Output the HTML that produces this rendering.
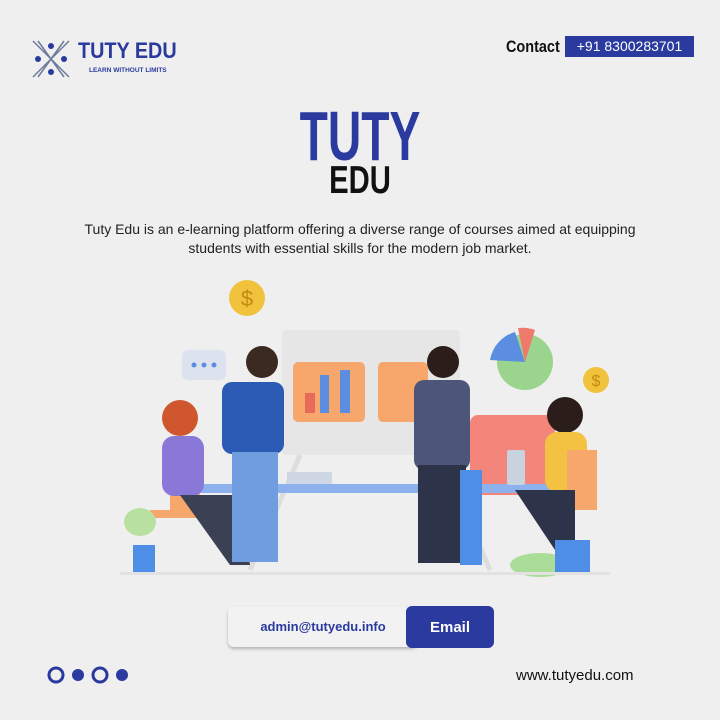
<!DOCTYPE html>
<html><head><meta charset="utf-8"><style>
body{margin:0;width:720px;height:720px;background:#efefef;position:relative;overflow:hidden;font-family:"Liberation Sans",sans-serif}
.a{position:absolute}
</style></head><body>
<svg class="a" style="left:30px;top:38px" width="42" height="42" viewBox="0 0 42 42">
<g stroke="#6d7a9a" stroke-width="1.5" fill="none"><path d="M3 3L39 39M39 3L3 39M8 3L21 21L34 3M8 39L21 21L34 39"/></g>
<g fill="#2a3a9e"><circle cx="21" cy="8" r="3"/><circle cx="21" cy="34" r="3"/><circle cx="8" cy="21" r="3"/><circle cx="34" cy="21" r="3"/></g></svg>
<div class="a" style="left:78px;top:38px;font-size:22px;font-weight:bold;color:#2a3a9e;transform:scaleX(.9);transform-origin:left">TUTY EDU</div>
<div class="a" style="left:89px;top:67px;font-size:6.5px;font-weight:bold;color:#2a3a9e">LEARN WITHOUT LIMITS</div>
<div class="a" style="left:506px;top:37px;font-size:17px;font-weight:bold;color:#111;transform:scaleX(.85);transform-origin:left">Contact</div>
<div class="a" style="left:565px;top:36px;width:129px;height:21px;background:#2a3a9e;color:#fff;font-size:14px;line-height:21px;text-align:center">+91 8300283701</div>
<div class="a" style="left:0;width:720px;top:96px;text-align:center;font-size:70px;font-weight:bold;color:#2a3a9e;transform:scaleX(.66)">TUTY</div>
<div class="a" style="left:0;width:720px;top:159px;text-align:center;font-size:39px;font-weight:bold;color:#111;transform:scaleX(.75)">EDU</div>
<div class="a" style="left:70px;width:580px;top:220px;text-align:center;font-size:14px;line-height:19px;color:#222">Tuty Edu is an e-learning platform offering a diverse range of courses aimed at equipping students with essential skills for the modern job market.</div>
<svg class="a" style="left:110px;top:280px" width="510" height="300" viewBox="110 280 510 300">
<circle cx="247" cy="298" r="18" fill="#f1c23c"/><text x="247" y="306" font-size="22" text-anchor="middle" fill="#c58a10">$</text>
<circle cx="596" cy="380" r="13" fill="#f1c23c"/><text x="596" y="386" font-size="16" text-anchor="middle" fill="#c58a10">$</text>
<circle cx="525" cy="362" r="28" fill="#9bd48c"/><path d="M525 362L490 360A35 35 0 0 1 515 332Z" fill="#5b8de0"/><path d="M525 362L518 328A35 35 0 0 1 535 330Z" fill="#ef7a6c"/>
<rect x="182" y="350" width="44" height="30" rx="6" fill="#dde3ee"/><circle cx="194" cy="365" r="2.5" fill="#5b8de0"/><circle cx="204" cy="365" r="2.5" fill="#5b8de0"/><circle cx="214" cy="365" r="2.5" fill="#5b8de0"/>
<rect x="282" y="330" width="178" height="125" rx="4" fill="#e6e6e6"/>
<rect x="293" y="362" width="72" height="60" rx="5" fill="#f7a76b"/><rect x="320" y="375" width="9" height="38" fill="#5b8de0"/><rect x="340" y="370" width="10" height="43" fill="#5b8de0"/><rect x="305" y="393" width="10" height="20" fill="#e86b5a"/>
<rect x="378" y="362" width="50" height="60" rx="5" fill="#f7a76b"/>
<rect x="470" y="415" width="85" height="80" rx="8" fill="#f3857a"/>
<path d="M300 455L250 570M440 455L490 570" stroke="#ddd" stroke-width="5"/>
<rect x="185" y="484" width="372" height="9" rx="4" fill="#8cb1ec"/>
<path d="M170 460h30v50h-30zM150 510h60v8h-60z" fill="#f7a76b"/>
<circle cx="180" cy="418" r="18" fill="#d0562e"/><rect x="162" y="436" width="42" height="60" rx="12" fill="#8a78d8"/><path d="M180 495h60l10 70h-20z" fill="#3a4152"/>
<circle cx="262" cy="362" r="16" fill="#3b2a22"/><rect x="222" y="382" width="62" height="72" rx="10" fill="#2b5bb5"/><rect x="232" y="452" width="46" height="110" fill="#6f9de0"/>
<circle cx="443" cy="362" r="16" fill="#2b1e1a"/><rect x="414" y="380" width="56" height="90" rx="10" fill="#4d5678"/><rect x="418" y="465" width="48" height="98" fill="#2d344a"/>
<path d="M460 470h22v95h-22z" fill="#4f8ee6"/>
<circle cx="565" cy="415" r="18" fill="#2b1e1a"/><rect x="545" y="432" width="42" height="60" rx="12" fill="#f3c242"/><rect x="567" y="450" width="30" height="60" fill="#f7a76b"/><path d="M515 490h60v60h-20z" fill="#2d344a"/>
<rect x="507" y="450" width="18" height="35" rx="2" fill="#c9d2df"/>
<rect x="287" y="472" width="45" height="12" fill="#cfd6e4"/>
<ellipse cx="140" cy="522" rx="16" ry="14" fill="#b8e0a0"/><rect x="133" y="545" width="22" height="30" fill="#4f8ee6"/>
<ellipse cx="540" cy="565" rx="30" ry="12" fill="#a9dd98"/><rect x="555" y="540" width="35" height="32" fill="#4f8ee6"/>
<rect x="120" y="572" width="490" height="3" fill="#e2e2e2"/>
</svg>
<div class="a" style="left:228px;top:607px;width:190px;height:40px;background:#f2f2f2;border-radius:6px;box-shadow:0 2px 3px rgba(0,0,0,.25)"></div>
<div class="a" style="left:232px;top:608px;width:182px;height:38px;line-height:38px;text-align:center;font-size:13px;font-weight:bold;color:#2a3a9e">admin@tutyedu.info</div>
<div class="a" style="left:406px;top:606px;width:88px;height:42px;background:#2a3a9e;border-radius:6px;color:#fff;font-size:15px;font-weight:bold;line-height:44px;text-align:center">Email</div>
<svg class="a" style="left:44px;top:664px" width="90" height="22"><g fill="none" stroke="#2a3a9e" stroke-width="3"><circle cx="12" cy="11" r="7"/><circle cx="56" cy="11" r="7"/></g><g fill="#2a3a9e"><circle cx="34" cy="11" r="6"/><circle cx="78" cy="11" r="6"/></g></svg>
<div class="a" style="left:516px;top:667px;font-size:15px;color:#111">www.tutyedu.com</div>
</body></html>
